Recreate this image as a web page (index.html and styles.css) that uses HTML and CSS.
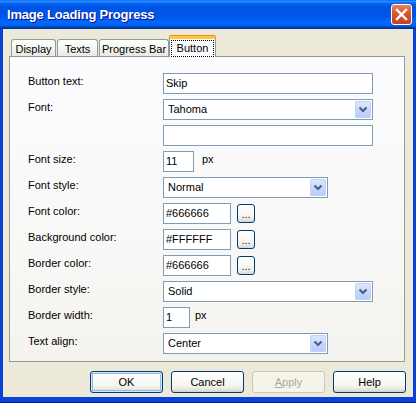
FILE: index.html
```html
<!DOCTYPE html>
<html>
<head>
<meta charset="utf-8">
<link rel="stylesheet" href="styles.css">
</head>
<body>
<div class="window">
  <div class="titlebar">
    <span class="title">Image Loading Progress</span>
    <span class="close">
      <svg width="13" height="13" viewBox="0 0 13 13"><path d="M2 2 L11 11 M11 2 L2 11" stroke="#fff" stroke-width="2.4" stroke-linecap="square"/></svg>
    </span>
  </div>
  <div class="body">
    <div class="tabs">
      <div class="tab w-display">Display</div>
      <div class="tab w-texts">Texts</div>
      <div class="tab w-progress">Progress Bar</div>
      <div class="tab active w-button"><span class="focus">Button</span></div>
    </div>
    <div class="panel">
      <div class="row"><div class="label">Button text:</div><div class="field w210">Skip</div></div>
      <div class="row"><div class="label">Font:</div><div class="field select w210"><span class="val">Tahoma</span><span class="arrow"><svg width="16" height="17" viewBox="0 0 16 17"><path d="M4.5 6.5 L8 10 L11.5 6.5" fill="none" stroke="#4d6185" stroke-width="2.2"/></svg></span></div></div>
      <div class="row"><div class="label"></div><div class="field w210"></div></div>
      <div class="row"><div class="label">Font size:</div><div class="field w31">11</div><span class="unit u8">px</span></div>
      <div class="row"><div class="label">Font style:</div><div class="field select w165"><span class="val">Normal</span><span class="arrow"><svg width="16" height="17" viewBox="0 0 16 17"><path d="M4.5 6.5 L8 10 L11.5 6.5" fill="none" stroke="#4d6185" stroke-width="2.2"/></svg></span></div></div>
      <div class="row"><div class="label">Font color:</div><div class="field w68">#666666</div><span class="dots">...</span></div>
      <div class="row"><div class="label">Background color:</div><div class="field w68">#FFFFFF</div><span class="dots">...</span></div>
      <div class="row"><div class="label">Border color:</div><div class="field w68">#666666</div><span class="dots">...</span></div>
      <div class="row"><div class="label">Border style:</div><div class="field select w210"><span class="val">Solid</span><span class="arrow"><svg width="16" height="17" viewBox="0 0 16 17"><path d="M4.5 6.5 L8 10 L11.5 6.5" fill="none" stroke="#4d6185" stroke-width="2.2"/></svg></span></div></div>
      <div class="row"><div class="label">Border width:</div><div class="field w27">1</div><span class="unit u5">px</span></div>
      <div class="row"><div class="label">Text align:</div><div class="field select w165"><span class="val">Center</span><span class="arrow"><svg width="16" height="17" viewBox="0 0 16 17"><path d="M4.5 6.5 L8 10 L11.5 6.5" fill="none" stroke="#4d6185" stroke-width="2.2"/></svg></span></div></div>
    </div>
    <div class="buttons">
      <div class="btn default">OK</div>
      <div class="btn">Cancel</div>
      <div class="btn disabled"><u>A</u>pply</div>
      <div class="btn">Help</div>
    </div>
  </div>
</div>
</body>
</html>
```
FILE: styles.css
```css
html, body { margin: 0; padding: 0; background: #ffffff; }
body { font-family: "Liberation Sans", Arial, sans-serif; font-size: 11px; color: #000; }
.window {
  width: 416px; height: 403px; box-sizing: border-box;
  background: #0842d9;
  padding: 0 3px 5px 3px;
  display: flex; flex-direction: column;
  border-bottom: 1px solid #001ea0;
}
.titlebar {
  height: 29px; flex: none;
  margin: 0 -3px;
  display: flex; align-items: center; justify-content: space-between;
  padding: 0 4px 0 7px;
  background: linear-gradient(to bottom, #0058ee 0%, #3593ff 4%, #288eff 6%, #127dff 8%, #036ffc 10%, #0262ee 14%, #0057e5 20%, #0054e3 24%, #0055eb 56%, #005bf5 66%, #026afe 76%, #0062ef 86%, #0052d6 92%, #0040ab 94%, #003092 100%);
}
.title {
  color: #fff; font-weight: bold; font-size: 13px; letter-spacing: -0.2px;
  text-shadow: 1px 1px #0f1089;
  padding-bottom: 1px;
}
.close {
  width: 19px; height: 19px; border: 1px solid #fff; border-radius: 3px;
  background: linear-gradient(to bottom, #e9835e 0%, #d9582e 40%, #c8401c 100%);
  display: flex; align-items: center; justify-content: center;
  margin-bottom: 1px;
}
.body {
  flex: 1; background: #ece9d8;
  padding: 7px 0 0 8px;
  display: flex; flex-direction: column;
}
.tabs { display: flex; align-items: flex-end; height: 20px; gap: 1px; }
.tab {
  box-sizing: border-box; height: 17px;
  border: 1px solid #919b9c; border-bottom: none;
  border-radius: 3px 3px 0 0;
  background: linear-gradient(to bottom, #ffffff 0%, #f3f3ef 60%, #e9e8e2 100%);
  display: flex; align-items: center; justify-content: center;
  padding-top: 1px;
}
.w-display { width: 45px; }
.w-texts { width: 41px; }
.w-progress { width: 70px; }
.w-button { width: 46px; }
.tab.active {
  height: 21px; margin-bottom: -1px;
  position: relative; z-index: 1;
  background: #fcfcfe;
  border-top: 3px solid #ffc83c;
  box-shadow: 0 -1px 0 #e68b2c;
  border-radius: 2px 2px 0 0;
  margin-left: -1px; width: 47px;
  padding-top: 0;
}
.focus {
  border: 1px dotted #000; padding: 1px 5px 1px 5px; line-height: 13px;
}
.panel {
  box-sizing: border-box; width: 396px; height: 306px; margin-left: -2px;
  border: 1px solid #919b9c;
  background: linear-gradient(to bottom, #fcfcfe 0%, #f8f8f7 60%, #f4f3ee 100%);
  padding: 16px 0 0 18px;
  display: flex; flex-direction: column; gap: 5px;
}
.row { display: flex; align-items: flex-start; height: 21px; }
.label { width: 135px; flex: none; line-height: 13px; padding-top: 2px; }
.field {
  box-sizing: border-box; height: 21px; flex: none;
  border: 1px solid #7f9db9; background: #fff;
  line-height: 19px; padding-left: 2px;
  display: flex; align-items: center;
}
.select { padding-left: 4px; }
.select .val { flex: 1; }
.arrow {
  width: 16px; height: 17px; margin: 0 1px 0 0;
  border-radius: 2px;
  background: linear-gradient(to bottom, #dfe8fe 0%, #c8d8fc 50%, #b7cbf8 100%);
  box-shadow: inset 0 0 0 1px #c0d2fb;
  display: flex;
}
.w210 { width: 210px; }
.w165 { width: 165px; }
.w31 { width: 31px; }
.w27 { width: 27px; }
.w68 { width: 68px; }
.unit { line-height: 13px; padding-top: 2px; }
.u8 { margin-left: 8px; }
.u5 { margin-left: 5px; }
.dots {
  box-sizing: border-box; width: 18px; height: 19px; margin: 1px 0 0 6px;
  border: 1px solid #003c74; border-radius: 3px;
  background: linear-gradient(to bottom, #ffffff 0%, #f4f4f0 70%, #dcd7cb 100%);
  text-align: center; line-height: 19px; color: #300060;
}
.buttons {
  display: flex; justify-content: flex-end; gap: 8px;
  padding: 9px 7px 0 0;
}
.btn {
  box-sizing: border-box; width: 73px; height: 22px;
  border: 1px solid #003c74; border-radius: 3px;
  background: linear-gradient(to bottom, #ffffff 0%, #f4f4f0 70%, #e5e1d6 90%, #d6d0c5 100%);
  display: flex; align-items: center; justify-content: center;
  font-size: 11px;
}
.btn.default { box-shadow: inset 0 0 0 1px #cee7ff, inset 0 0 0 2px #98b8ea; }
.btn.disabled { border-color: #c9c7ba; background: #f5f4ea; color: #aca899; }
.btn u { text-decoration: underline; }
```
